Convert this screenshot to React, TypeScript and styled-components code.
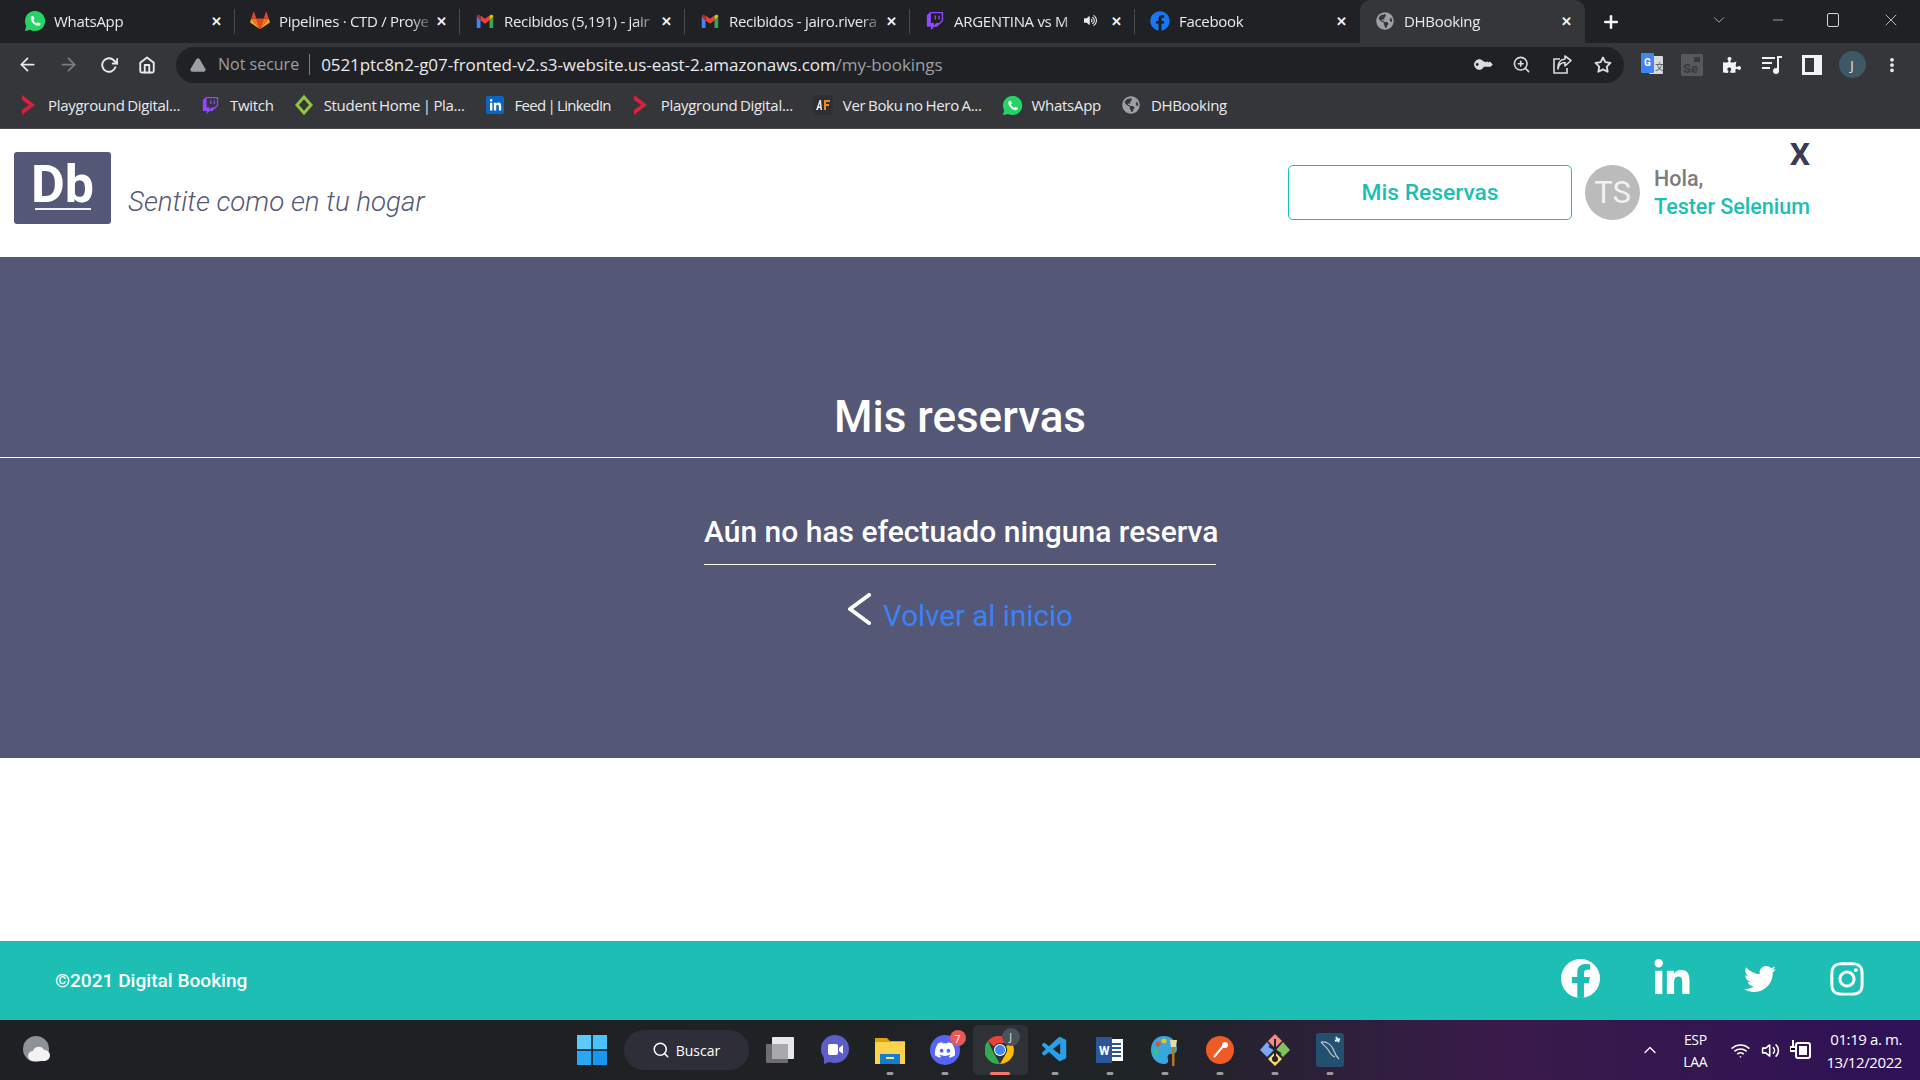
import React from "react";
import styled, { createGlobalStyle } from "styled-components";
import {
  FaTwitch,
  FaFacebook,
  FaFacebookF,
  FaLinkedinIn,
  FaTwitter,
  FaInstagram,
  FaGlobeAmericas,
  FaDiscord,
  FaPuzzlePiece,
  FaKey,
  FaVolumeUp,
} from "react-icons/fa";
import { FiArrowLeft, FiArrowRight, FiRotateCw, FiHome, FiStar, FiZoomIn, FiChevronDown, FiChevronUp, FiMinus, FiX, FiPlus, FiWifi, FiSearch, FiMoreVertical, FiAlertTriangle, FiVolume2 } from "react-icons/fi";
import { VscVscode } from "react-icons/vsc";

const UI_FONT = `"Open Sans", "Noto Sans", sans-serif`;
const APP_FONT = `Roboto, "Liberation Sans", sans-serif`;

const GlobalStyle = createGlobalStyle`
  html, body {
    margin: 0;
    padding: 0;
    background: #fff;
  }
  * {
    box-sizing: border-box;
  }
`;

const WhatsappIcon = ({ size }: { size: number }) => (
  <svg width={size} height={size} viewBox="0 0 24 24">
    <path fill="#25d366" d="M12 1a11 11 0 1 1-5.300 20.600L1 23l1.500-5.500A11 11 0 0 1 12 1z" />
    <path fill="#fff" d="M8.500 6.500c-1.500 1-1.800 3-.2 5.800 1.800 3 4.700 5 7 5 1.500 0 2.800-1 2.900-2.500l-3-1.500-1.200 1.300c-1.500-.6-3-2-3.800-3.800l1.200-1.200-1.300-3z" />
  </svg>
);

const GitlabIcon = () => (
  <svg width="20" height="20" viewBox="0 0 24 24">
    <path fill="#e24329" d="M12 22 16.400 9H7.600z" />
    <path fill="#fc6d26" d="M12 22 7.600 9H1.500z" />
    <path fill="#fca326" d="M1.500 9 .2 13.200c-.1.4 0 .8.400 1L12 22z" />
    <path fill="#e24329" d="M1.500 9h6.100L5 1.200c-.1-.4-.7-.4-.9 0z" />
    <path fill="#fc6d26" d="M12 22 16.400 9h6.100z" />
    <path fill="#fca326" d="m22.500 9 1.300 4.200c.1.400 0 .8-.4 1L12 22z" />
    <path fill="#e24329" d="M22.500 9h-6.100L19 1.200c.1-.4.700-.4.900 0z" />
  </svg>
);

const GmailIcon = () => (
  <svg width="18" height="18" viewBox="0 0 24 24">
    <path fill="#4285f4" d="M1 6v14c0 .8.600 1.400 1.400 1.400H6V11z" />
    <path fill="#34a853" d="M23 6v14c0 .8-.6 1.400-1.400 1.400H18V11z" />
    <path fill="#ea4335" d="M6 11V4.500L12 9l6-4.500V11l-6 4.500z" />
    <path fill="#c5221f" d="M1 6c0-2 2.200-3 3.600-1.900L6 5.200V11z" />
    <path fill="#fbbc04" d="M23 6c0-2-2.200-3-3.600-1.900L18 5.200V11z" />
  </svg>
);

const PlaygroundIcon = () => (
  <svg width="18" height="20" viewBox="0 0 18 20">
    <path fill="#d8203f" d="M2 0 15 10 2 20V15L9 10 2 5z" />
  </svg>
);

const StudentIcon = () => (
  <svg width="20" height="20" viewBox="0 0 20 20">
    <path fill="none" stroke="#8cc63f" strokeWidth="3" d="M10 2 17 10 10 18 3 10z" />
  </svg>
);

const AnimeIcon = () => (
  <svg width="20" height="20" viewBox="0 0 20 20">
    <rect width="20" height="20" rx="4" fill="#2d2f33" />
    <path fill="#e8e8e8" d="M3 15 6.500 5H8l1 10H7.500l-.2-2H5.500L5 15zM5.900 11.500H7.100L6.900 8z" />
    <path fill="#f08a24" d="M11 5h6v2h-4v2h3v2h-3v4h-2z" />
  </svg>
);

const ShareIcon = () => (
  <svg width="20" height="20" viewBox="0 0 20 20">
    <path fill="none" stroke="currentColor" strokeWidth="1.600" d="M8 4H2v14h13v-5" />
    <path fill="none" stroke="currentColor" strokeWidth="1.600" strokeLinejoin="round" d="M6 14c.5-4 3-6.500 7-6.500V11l6-5.500L13 1v3C8 4.500 5.500 8.500 6 14z" />
  </svg>
);

const GlobeGrey = styled(FaGlobeAmericas)`
  color: #9aa0a6;
  font-size: 18px;
`;

const LinkedinTile = styled.span`
  width: 18px;
  height: 18px;
  display: flex;
  align-items: center;
  justify-content: center;
  border-radius: 2px;
  background: #0a66c2;
  color: #fff;
`;

const tabs = [
  { title: "WhatsApp", icon: <WhatsappIcon size={22} /> },
  { title: "Pipelines · CTD / Proye", icon: <GitlabIcon /> },
  { title: "Recibidos (5,191) - jair", icon: <GmailIcon /> },
  { title: "Recibidos - jairo.rivera", icon: <GmailIcon /> },
  { title: "ARGENTINA vs M", icon: <FaTwitch color="#9146ff" size={18} />, audio: true },
  { title: "Facebook", icon: <FaFacebook color="#1877f2" size={20} /> },
  { title: "DHBooking", icon: <GlobeGrey />, active: true },
];

const bookmarks = [
  { title: "Playground Digital...", icon: <PlaygroundIcon /> },
  { title: "Twitch", icon: <FaTwitch color="#9146ff" size={17} /> },
  { title: "Student Home | Pla...", icon: <StudentIcon /> },
  {
    title: "Feed | LinkedIn",
    tight: true,
    icon: (
      <LinkedinTile>
        <FaLinkedinIn size={13} />
      </LinkedinTile>
    ),
  },
  { title: "Playground Digital...", icon: <PlaygroundIcon /> },
  { title: "Ver Boku no Hero A...", icon: <AnimeIcon /> },
  { title: "WhatsApp", icon: <WhatsappIcon size={21} /> },
  { title: "DHBooking", icon: <GlobeGrey /> },
];

const WindowsLogo = () => (
  <svg width="30" height="30" viewBox="0 0 30 30">
    <rect x="0" y="0" width="14.200" height="14.200" fill="#5ccbfb" />
    <rect x="15.800" y="0" width="14.200" height="14.200" fill="#4cc2fa" />
    <rect x="0" y="15.800" width="14.200" height="14.200" fill="#2aa8f5" />
    <rect x="15.800" y="15.800" width="14.200" height="14.200" fill="#1a96ef" />
  </svg>
);

const TaskViewIcon = () => (
  <svg width="30" height="30" viewBox="0 0 30 30">
    <rect x="7" y="2" width="22" height="22" rx="1" fill="#e8e8ea" />
    <rect x="1" y="9" width="22" height="19" rx="1" fill="#6e6e70" />
    <rect x="7" y="9" width="16" height="15" fill="#a9a9ab" />
  </svg>
);

const MeetIcon = () => (
  <svg width="30" height="30" viewBox="0 0 30 30">
    <circle cx="15" cy="14" r="14" fill="#5b5fc7" />
    <path fill="#5b5fc7" d="M4 20v9l8-3z" />
    <rect x="8" y="9" width="10" height="11" rx="2" fill="#fff" />
    <path fill="#fff" d="m19 13 4-3v9l-4-3z" />
  </svg>
);

const FolderIcon = () => (
  <svg width="30" height="30" viewBox="0 0 30 30">
    <path fill="#e0a106" d="M0 3h12l3 3h15v6H0z" />
    <rect y="7" width="30" height="22" fill="#fcd34d" />
    <rect x="5" y="19" width="20" height="10" fill="#0f7fd4" />
    <rect x="11" y="22" width="8" height="2" fill="#ffe58a" />
  </svg>
);

const ChromeIcon = () => (
  <svg width="30" height="30" viewBox="0 0 30 30">
    <path fill="#ea4335" d="M15 1a14 14 0 0 1 12.100 7H15a7 7 0 0 0-6.100 3.500L3 5.800A14 14 0 0 1 15 1z" />
    <path fill="#34a853" d="M3 5.800 8.900 18.500 15 29A14 14 0 0 1 3 5.800z" />
    <path fill="#fbbc04" d="M27.100 8a14 14 0 0 1-12.100 21l6-10.500A7 7 0 0 0 21 11z" />
    <circle cx="15" cy="15" r="6" fill="#fff" />
    <circle cx="15" cy="15" r="5" fill="#4285f4" />
  </svg>
);

const WordIcon = () => (
  <svg width="30" height="30" viewBox="0 0 30 30">
    <rect x="7" y="4" width="21" height="22" fill="#fff" />
    <path stroke="#2b579a" strokeWidth="2" d="M17 9h9M17 13h9M17 17h9M17 21h9" />
    <rect x="1" y="2" width="16" height="26" fill="#2b579a" />
    <text x="4" y="20" fontSize="12" fontFamily="Roboto" fontWeight="700" fill="#fff">W</text>
  </svg>
);

const PaintIcon = () => (
  <svg width="30" height="32" viewBox="0 0 30 32">
    <path fill="#3aa7dc" d="M14 2c8 0 13 6 13 13 0 4-3 5-6 5-3 0-4 2-3 5 1 3-1 5-4 5C7 30 1 24 1 16S6 2 14 2z" />
    <circle cx="8" cy="10" r="2.500" fill="#e74c3c" />
    <circle cx="6" cy="18" r="2.500" fill="#2ecc71" />
    <circle cx="14" cy="7" r="2.500" fill="#f1c40f" />
    <rect x="22" y="12" width="2.500" height="20" fill="#b5762a" />
    <path fill="#e7d9a8" d="M20 6h7l-1 7h-5z" />
  </svg>
);

const PostmanIcon = () => (
  <svg width="30" height="30" viewBox="0 0 30 30">
    <circle cx="15" cy="15" r="14" fill="#ef5b25" />
    <path stroke="#fff" strokeWidth="2" d="M9 22 20 9" />
    <circle cx="20" cy="10" r="3" fill="#fff" />
  </svg>
);

const GitToolIcon = () => (
  <svg width="30" height="32" viewBox="0 0 30 32">
    <path fill="#f28b82" d="m15 0 7 7-7 7-7-7z" />
    <path fill="#81c05c" d="m23 8 7 8-7 7-7-7z" />
    <path fill="#7aa7f7" d="m7 8 7 8-7 7-7-7z" />
    <path fill="#f7dc6f" d="m15 18 7 7-7 7-7-7z" />
    <path stroke="#20232a" strokeWidth="2" fill="none" d="M15 5v22M9 12l12 8" />
    <circle cx="15" cy="25" r="3" fill="#20232a" />
  </svg>
);

const MysqlIcon = () => (
  <svg width="28" height="34" viewBox="0 0 28 34">
    <rect width="28" height="34" rx="3" fill="#24506f" />
    <path fill="none" stroke="#b9c8d4" strokeWidth="1.200" d="M5 9c6-1 11 3 13 9 1 3 3 6 5 8M5 9c2 3 5 4 8 9 1 2 3 5 6 6" />
    <path stroke="#e6edf2" strokeWidth="2" d="m20 4 3 5M19 8l5-2" />
  </svg>
);

const BatteryIcon = () => (
  <svg width="22" height="24" viewBox="0 0 22 24">
    <rect x="6" y="5" width="14" height="15" rx="2" fill="none" stroke="#fff" strokeWidth="2" />
    <rect x="9" y="8" width="8" height="9" fill="#fff" />
    <path stroke="#fff" strokeWidth="2" d="M3 2v7M0 9h6v4H0z" />
  </svg>
);

const TranslateIcon = () => (
  <svg width="22" height="24" viewBox="0 0 22 24">
    <rect x="8" y="3" width="14" height="18" rx="1" fill="#d8dbe0" />
    <rect x="0" y="0" width="13" height="20" rx="1" fill="#4285f4" />
    <text x="3" y="13" fontSize="10" fontWeight="700" fontFamily="Roboto" fill="#fff">G</text>
    <text x="14" y="17" fontSize="9" fontFamily="Noto Sans CJK SC" fill="#555">文</text>
  </svg>
);

const SeleniumIcon = () => (
  <svg width="22" height="22" viewBox="0 0 22 22">
    <rect width="22" height="22" rx="1" fill="#57585a" />
    <rect x="13" y="3" width="6" height="5" fill="#3a3b3d" />
    <text x="2" y="19" fontSize="13" fontWeight="700" fontFamily="Roboto" fill="#3a3b3d">Se</text>
  </svg>
);

const QueueIcon = () => (
  <svg width="22" height="20" viewBox="0 0 22 20">
    <path stroke="#f1f3f4" strokeWidth="2" d="M1 3h13M1 8h10M1 13h8" />
    <path stroke="#f1f3f4" strokeWidth="2" d="M17 17V2h4" fill="none" />
    <circle cx="15" cy="16" r="3" fill="#f1f3f4" />
  </svg>
);

const SidePanelIcon = () => (
  <svg width="20" height="20" viewBox="0 0 20 20">
    <rect x="1.500" y="1.500" width="17" height="17" fill="none" stroke="#f1f3f4" strokeWidth="3" />
    <rect x="12" y="2" width="6" height="16" fill="#f1f3f4" />
  </svg>
);

const WeatherIcon = () => (
  <svg width="30" height="30" viewBox="0 0 30 30">
    <circle cx="14" cy="14" r="13" fill="#8d9296" />
    <path fill="#f2f2f2" d="M11 26a5 5 0 0 1 0-10 6 6 0 0 1 11-1 5.500 5.500 0 0 1 1 11z" />
  </svg>
);

const App = () => (
  <>
    <GlobalStyle />
    <Screen>
      <TabStrip>
        {tabs.map((tab) => (
          <Tab key={tab.title} $active={tab.active}>
            <TabIcon>{tab.icon}</TabIcon>
            <TabTitle>{tab.title}</TabTitle>
            {tab.audio ? <AudioIcon color="#e8eaed" size={13} /> : null}
            <TabClose>✕</TabClose>
          </Tab>
        ))}
        <NewTab>
          <FiPlus size={20} strokeWidth={3} />
        </NewTab>
        <WindowControls>
          <FiChevronDown size={18} strokeWidth={1} />
          <FiMinus size={16} strokeWidth={1} />
          <RestoreIcon />
          <FiX size={20} strokeWidth={1} />
        </WindowControls>
      </TabStrip>

      <Toolbar>
        <NavButtons>
          <FiArrowLeft size={21} />
          <Dim>
            <FiArrowRight size={21} />
          </Dim>
          <FiRotateCw size={18} strokeWidth={2.500} />
          <FiHome size={18} strokeWidth={2.500} />
        </NavButtons>
        <Omnibox>
          <FiAlertTriangle size={16} color="#9aa0a6" fill="#9aa0a6" stroke="#9aa0a6" />
          <NotSecure>Not secure</NotSecure>
          <UrlText>
            0521ptc8n2-g07-fronted-v2.s3-website.us-east-2.amazonaws.com<UrlPath>/my-bookings</UrlPath>
          </UrlText>
          <OmniActions>
            <KeyIcon size={15} />
            <FiZoomIn size={19} />
            <ShareIcon />
            <FiStar size={18} strokeWidth={2.500} />
          </OmniActions>
        </Omnibox>
        <Extensions>
          <ExtSlot>
            <TranslateIcon />
          </ExtSlot>
          <ExtSlot>
            <SeleniumIcon />
          </ExtSlot>
          <ExtSlot>
            <FaPuzzlePiece size={18} />
          </ExtSlot>
          <ExtSlot>
            <QueueIcon />
          </ExtSlot>
          <ExtSlot>
            <SidePanelIcon />
          </ExtSlot>
          <ExtSlot>
            <ProfileBadge>J</ProfileBadge>
          </ExtSlot>
          <ExtSlot>
            <FiMoreVertical size={18} strokeWidth={3} />
          </ExtSlot>
        </Extensions>
      </Toolbar>

      <BookmarkBar>
        {bookmarks.map((item, i) => (
          <Bookmark key={item.title + i} $tight={item.tight}>
            <BookmarkIcon>{item.icon}</BookmarkIcon>
            {item.title}
          </Bookmark>
        ))}
      </BookmarkBar>

      <Page>
        <Header>
          <Brand>
            <Logo>
              <LogoText>Db</LogoText>
            </Logo>
            <Tagline>Sentite como en tu hogar</Tagline>
          </Brand>
          <UserArea>
            <BookingsButton>Mis Reservas</BookingsButton>
            <Avatar>TS</Avatar>
            <UserText>
              <Greeting>Hola,</Greeting>
              <UserName>Tester Selenium</UserName>
            </UserText>
            <CloseX>X</CloseX>
          </UserArea>
        </Header>

        <Hero>
          <HeroTitle>Mis reservas</HeroTitle>
          <Message>
            <MessageText>Aún no has efectuado ninguna reserva</MessageText>
            <BackRow>
              <BackChevron viewBox="0 0 24 32" width="24" height="32">
                <path d="M22 2 3 16l19 14" fill="none" stroke="#fff" strokeWidth="4" strokeLinecap="round" strokeLinejoin="round" />
              </BackChevron>
              <BackLink href="#">Volver al inicio</BackLink>
            </BackRow>
          </Message>
        </Hero>

        <Blank />

        <Footer>
          <Copyright>©2021 Digital Booking</Copyright>
          <Socials>
            <FacebookRound>
              <FaFacebookF />
            </FacebookRound>
            <FaLinkedinIn size={40} />
            <FaTwitter size={32} />
            <FaInstagram size={38} />
          </Socials>
        </Footer>
      </Page>

      <Taskbar>
        <WeatherSlot>
          <WeatherIcon />
        </WeatherSlot>
        <TaskCenter>
          <TaskSlot>
            <WindowsLogo />
          </TaskSlot>
          <SearchPill>
            <FiSearch size={18} />
            Buscar
          </SearchPill>
          <TaskSlot>
            <TaskViewIcon />
          </TaskSlot>
          <TaskSlot>
            <MeetIcon />
          </TaskSlot>
          <TaskSlot $dot>
            <FolderIcon />
          </TaskSlot>
          <TaskSlot $dot>
            <DiscordTile>
              <FaDiscord size={22} />
            </DiscordTile>
            <Badge>7</Badge>
          </TaskSlot>
          <TaskSlot $active>
            <ChromeIcon />
            <ChromeBadge>J</ChromeBadge>
          </TaskSlot>
          <TaskSlot $dot>
            <VscVscode size={30} color="#2b9fe6" />
          </TaskSlot>
          <TaskSlot $dot>
            <WordIcon />
          </TaskSlot>
          <TaskSlot $dot>
            <PaintIcon />
          </TaskSlot>
          <TaskSlot $dot>
            <PostmanIcon />
          </TaskSlot>
          <TaskSlot $dot>
            <GitToolIcon />
          </TaskSlot>
          <TaskSlot $dot>
            <MysqlIcon />
          </TaskSlot>
        </TaskCenter>
        <Tray>
          <FiChevronUp size={20} strokeWidth={1.500} />
          <Lang>
            <span>ESP</span>
            <span>LAA</span>
          </Lang>
          <TrayIcons>
            <FiWifi size={19} />
            <FiVolume2 size={19} />
            <BatteryIcon />
          </TrayIcons>
          <Clock>
            <span>01:19 a. m.</span>
            <span>13/12/2022</span>
          </Clock>
        </Tray>
      </Taskbar>
    </Screen>
  </>
);

export default App;

const Screen = styled.div`
  width: 1920px;
  height: 1080px;
  display: flex;
  flex-direction: column;
  overflow: hidden;
  font-family: ${UI_FONT};
`;

const TabStrip = styled.div`
  height: 43px;
  flex: none;
  display: flex;
  align-items: stretch;
  padding-left: 10px;
  background: #202124;
  color: #e8eaed;
`;

const Tab = styled.div<{ $active?: boolean }>`
  width: 225px;
  flex: none;
  display: flex;
  align-items: center;
  gap: 8px;
  padding: 0 12px 2px 14px;
  font-size: 15px;
  letter-spacing: -0.3px;
  border-right: 1px solid ${(p) => (p.$active ? "transparent" : "#4b4c4f")};
  border-radius: ${(p) => (p.$active ? "10px 10px 0 0" : "0")};
  background: ${(p) => (p.$active ? "#35363a" : "transparent")};
  margin: ${(p) => (p.$active ? "0" : "9px 0")};

  &:nth-child(6) {
    border-right-color: transparent;
  }
`;

const TabIcon = styled.span`
  width: 22px;
  flex: none;
  display: flex;
  align-items: center;
  justify-content: center;
`;

const TabTitle = styled.span`
  flex: 1;
  min-width: 0;
  white-space: nowrap;
  mask-image: linear-gradient(to right, #000 88%, rgba(0, 0, 0, 0.3));
`;

const AudioIcon = styled(FaVolumeUp)`
  flex: none;
  margin-right: 6px;
`;

const TabClose = styled.span`
  flex: none;
  font-size: 13px;
  font-weight: 700;
  color: #f1f3f4;
`;

const NewTab = styled.div`
  width: 52px;
  flex: none;
  display: flex;
  align-items: center;
  justify-content: center;
  color: #f1f3f4;
`;

const WindowControls = styled.div`
  margin-left: auto;
  width: 229px;
  display: flex;
  align-items: center;
  justify-content: space-between;
  padding: 0 19px 4px 19px;
  color: #d5d6d8;
`;

const RestoreIcon = styled.span`
  width: 12px;
  height: 14px;
  border: 1px solid #d5d6d8;
  border-radius: 2px;
`;

const Toolbar = styled.div`
  height: 43px;
  flex: none;
  display: flex;
  align-items: center;
  background: #35363a;
  color: #e8eaed;
`;

const NavButtons = styled.div`
  width: 176px;
  flex: none;
  display: flex;
  align-items: center;
  justify-content: space-between;
  padding: 0 20px 0 17px;
`;

const Dim = styled.span`
  display: flex;
  color: #7c7e82;
`;

const Omnibox = styled.div`
  width: 1448px;
  height: 36px;
  flex: none;
  display: flex;
  align-items: center;
  padding: 0 12px 0 14px;
  border-radius: 18px;
  background: #202124;
`;

const NotSecure = styled.span`
  margin-left: 12px;
  padding-right: 10px;
  border-right: 1px solid #7c7e82;
  font-size: 16px;
  line-height: 21px;
  color: #9aa0a6;
`;

const UrlText = styled.span`
  margin-left: 11px;
  font-size: 17px;
  letter-spacing: -0.07px;
  color: #e8eaed;
`;

const UrlPath = styled.span`
  color: #9aa0a6;
`;

const OmniActions = styled.div`
  margin-left: auto;
  width: 137px;
  display: flex;
  align-items: center;
  justify-content: space-between;
  color: #dadce0;
`;

const KeyIcon = styled(FaKey)`
  transform: rotate(-135deg);
`;

const Extensions = styled.div`
  flex: 1;
  display: flex;
  align-items: center;
  padding-left: 8px;
  color: #f1f3f4;
`;

const ExtSlot = styled.span`
  width: 40px;
  flex: none;
  display: flex;
  align-items: center;
  justify-content: center;
`;

const ProfileBadge = styled.span`
  width: 27px;
  height: 27px;
  display: flex;
  align-items: center;
  justify-content: center;
  border-radius: 50%;
  background: #3f5866;
  font-size: 13px;
  color: #e8eaed;
`;

const BookmarkBar = styled.div`
  height: 43px;
  flex: none;
  display: flex;
  align-items: center;
  gap: 20px;
  padding: 0 0 4px 18px;
  border-bottom: 1px solid #4a4b4f;
  background: #35363a;
  color: #e8eaed;
  font-size: 15px;
  letter-spacing: -0.3px;
  word-spacing: -1px;
`;

const Bookmark = styled.div<{ $tight?: boolean }>`
  display: flex;
  align-items: center;
  gap: 9px;
  white-space: nowrap;
  letter-spacing: ${(p) => (p.$tight ? "-0.75px" : "-0.3px")};
`;

const BookmarkIcon = styled.span`
  width: 21px;
  display: flex;
  justify-content: center;
`;

const Page = styled.main`
  flex: 1;
  display: flex;
  flex-direction: column;
  font-family: ${APP_FONT};
`;

const Header = styled.header`
  height: 128px;
  flex: none;
  display: flex;
  align-items: flex-start;
  justify-content: space-between;
  padding: 23px 110px 0 14px;
  background: #fff;
`;

const Brand = styled.div`
  display: flex;
  align-items: flex-end;
  gap: 17px;
`;

const Logo = styled.div`
  width: 97px;
  height: 72px;
  display: flex;
  justify-content: center;
  padding-top: 5px;
  border-radius: 3px;
  background: #545776;
`;

const LogoText = styled.span`
  height: 53px;
  width: 56px;
  display: flex;
  justify-content: center;
  border-bottom: 2px solid #f0f0f4;
  font-size: 52px;
  line-height: 55px;
  font-weight: 700;
  color: #fff;
`;

const Tagline = styled.span`
  padding-bottom: 6px;
  font-size: 27.7px;
  font-weight: 300;
  font-style: italic;
  color: #545776;
`;

const UserArea = styled.div`
  display: flex;
  align-items: flex-start;
  padding-top: 13px;
  position: relative;
`;

const BookingsButton = styled.button`
  width: 284px;
  height: 55px;
  margin-right: 13px;
  border: 1px solid #1dbeb4;
  border-radius: 5px;
  background: #fff;
  font-family: ${APP_FONT};
  font-size: 22.8px;
  font-weight: 500;
  color: #1dbeb4;
`;

const Avatar = styled.div`
  width: 55px;
  height: 55px;
  margin-right: 14px;
  display: flex;
  align-items: center;
  justify-content: center;
  border-radius: 50%;
  background: #bbb;
  font-size: 31px;
  color: #f2f2f2;
`;

const UserText = styled.div`
  display: flex;
  flex-direction: column;
  font-size: 21.5px;
  line-height: 28px;
  font-weight: 500;
`;

const Greeting = styled.span`
  color: #7c7c7c;
`;

const UserName = styled.span`
  color: #1dbeb4;
`;

const CloseX = styled.span`
  position: absolute;
  top: -17px;
  right: 0;
  font-size: 32px;
  line-height: 38px;
  font-weight: 700;
  color: #383b58;
`;

const Hero = styled.section`
  height: 501px;
  flex: none;
  background: #545776;
  color: #fff;
  padding-top: 130px;
`;

const HeroTitle = styled.h1`
  margin: 0;
  height: 71px;
  border-bottom: 1px solid #fff;
  text-align: center;
  font-size: 44px;
  line-height: 60px;
  font-weight: 500;
`;

const Message = styled.div`
  width: 512px;
  margin: 0 auto;
  padding-top: 51px;
  display: flex;
  flex-direction: column;
  align-items: center;
`;

const MessageText = styled.h2`
  margin: 0;
  width: 100%;
  height: 56px;
  border-bottom: 1px solid #fff;
  text-align: center;
  white-space: nowrap;
  font-size: 30px;
  line-height: 45px;
  font-weight: 500;
`;

const BackRow = styled.div`
  display: flex;
  align-items: flex-start;
  gap: 12px;
  margin-top: 31px;
`;

const BackChevron = styled.svg`
  flex: none;
  margin-top: -3px;
`;

const BackLink = styled.a`
  font-size: 29.5px;
  line-height: 40px;
  color: #3b82f6;
  text-decoration: none;
`;

const Blank = styled.div`
  flex: 1;
  background: #fff;
`;

const Footer = styled.footer`
  height: 79px;
  flex: none;
  display: flex;
  align-items: center;
  justify-content: space-between;
  padding: 0 54px 0 55px;
  background: #1dbeb4;
  color: #fff;
`;

const Copyright = styled.span`
  font-size: 19.1px;
  font-weight: 500;
`;

const Socials = styled.div`
  display: flex;
  align-items: center;
  gap: 52px;
  margin-bottom: 4px;
`;

const FacebookRound = styled.span`
  width: 39px;
  height: 39px;
  display: flex;
  align-items: flex-end;
  justify-content: center;
  overflow: hidden;
  border-radius: 50%;
  background: #fff;
  font-size: 34px;
  color: #1dbeb4;
`;

const Taskbar = styled.footer`
  height: 60px;
  flex: none;
  display: grid;
  grid-template-columns: 1fr auto 1fr;
  align-items: center;
  padding: 0 18px 0 20px;
  background: linear-gradient(90deg, #1f2024 0%, #1f2024 28%, #1f2427 60%, #3a1b4a 78%, #2e1157 100%);
  color: #fff;
`;

const WeatherSlot = styled.div`
  display: flex;
  padding-left: 2px;
`;

const TaskCenter = styled.div`
  display: flex;
  align-items: center;
`;

const TaskSlot = styled.div<{ $dot?: boolean; $active?: boolean }>`
  position: relative;
  width: 55px;
  height: 50px;
  display: flex;
  align-items: center;
  justify-content: center;
  border-radius: 5px;
  background: ${(p) => (p.$active ? "#2e3236" : "transparent")};

  &::after {
    content: "";
    display: ${(p) => (p.$dot || p.$active ? "block" : "none")};
    position: absolute;
    bottom: 0;
    left: 50%;
    transform: translateX(-50%);
    width: ${(p) => (p.$active ? "20px" : "7px")};
    height: 3px;
    border-radius: 2px;
    background: ${(p) => (p.$active ? "#f4796a" : "#9b9b9b")};
  }
`;

const SearchPill = styled.div`
  width: 125px;
  height: 40px;
  margin: 0 4px;
  display: flex;
  align-items: center;
  justify-content: center;
  gap: 6px;
  border-radius: 20px;
  background: #2e2e38;
  font-size: 14px;
`;

const DiscordTile = styled.span`
  width: 30px;
  height: 30px;
  display: flex;
  align-items: center;
  justify-content: center;
  border-radius: 50%;
  background: #5865f2;
  color: #fff;
`;

const Badge = styled.span`
  position: absolute;
  top: 5px;
  right: 7px;
  width: 16px;
  height: 16px;
  display: flex;
  align-items: center;
  justify-content: center;
  border-radius: 50%;
  background: #e95757;
  font-size: 11px;
  color: #fff;
`;

const ChromeBadge = styled.span`
  position: absolute;
  top: 3px;
  right: 8px;
  width: 18px;
  height: 18px;
  display: flex;
  align-items: center;
  justify-content: center;
  border-radius: 50%;
  background: #4a525a;
  font-size: 10px;
  color: #e8eaed;
`;

const Tray = styled.div`
  justify-self: end;
  display: flex;
  align-items: center;
`;

const Lang = styled.div`
  width: 44px;
  margin-left: 13px;
  display: flex;
  flex-direction: column;
  align-items: center;
  gap: 3px;
  font-size: 14px;
  letter-spacing: -0.3px;
`;

const TrayIcons = styled.div`
  margin-left: 14px;
  width: 81px;
  display: flex;
  align-items: center;
  justify-content: space-between;
`;

const Clock = styled.div`
  margin-left: 14px;
  display: flex;
  flex-direction: column;
  align-items: flex-end;
  gap: 3px;
  font-size: 15px;
  letter-spacing: -0.4px;
`;
